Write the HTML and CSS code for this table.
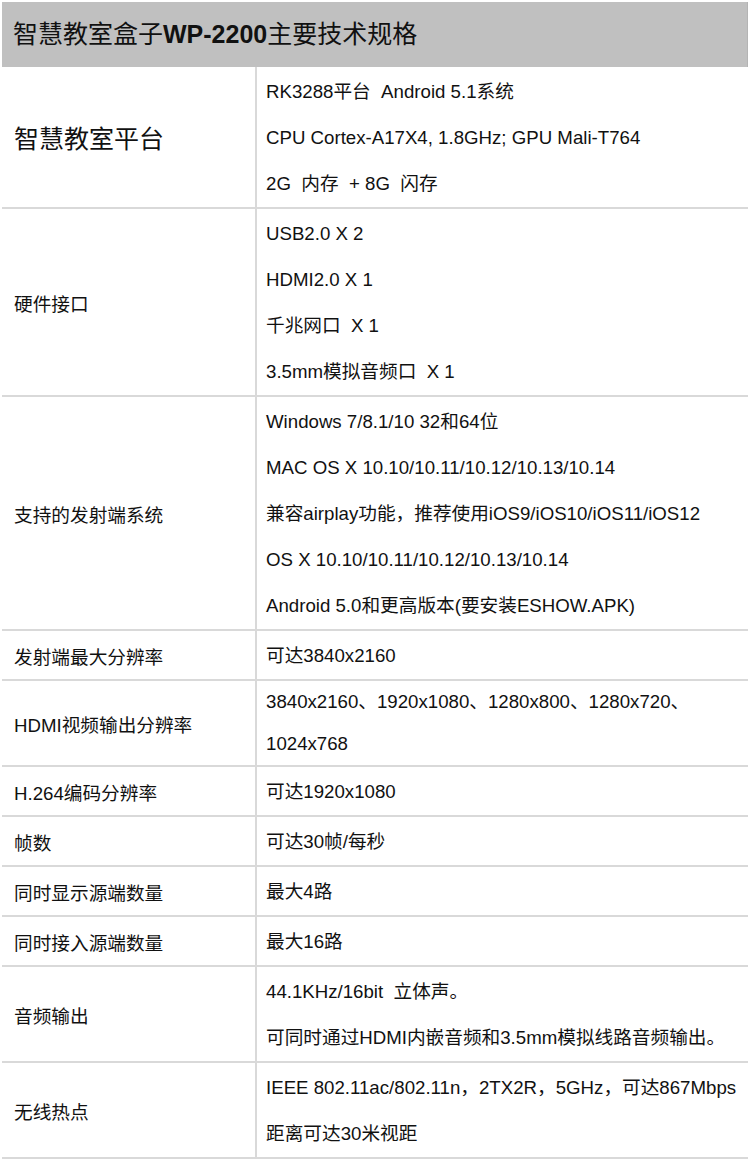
FILE: index.html
```html
<!DOCTYPE html>
<html lang="zh-CN">
<head>
<meta charset="utf-8">
<title>智慧教室盒子WP-2200主要技术规格</title>
<link rel="stylesheet" href="styles.css">
</head>
<body>
<div class="sheet">
  <div class="title">智慧教室盒子<b>WP-2200</b>主要技术规格</div>
  <table class="spec">
    <colgroup><col class="col-key"><col></colgroup>
    <tr>
      <th class="label label-lg">智慧教室平台</th>
      <td class="value">
        <p>RK3288平台&nbsp; Android 5.1系统</p>
        <p>CPU Cortex-A17X4, 1.8GHz; GPU Mali-T764</p>
        <p>2G&nbsp; 内存&nbsp; + 8G&nbsp; 闪存</p>
      </td>
    </tr>
    <tr>
      <th class="label">硬件接口</th>
      <td class="value">
        <p>USB2.0 X 2</p>
        <p>HDMI2.0 X 1</p>
        <p>千兆网口&nbsp; X 1</p>
        <p>3.5mm模拟音频口&nbsp; X 1</p>
      </td>
    </tr>
    <tr>
      <th class="label">支持的发射端系统</th>
      <td class="value">
        <p>Windows 7/8.1/10 32和64位</p>
        <p>MAC OS X 10.10/10.11/10.12/10.13/10.14</p>
        <p>兼容airplay功能，推荐使用iOS9/iOS10/iOS11/iOS12</p>
        <p>OS X 10.10/10.11/10.12/10.13/10.14</p>
        <p>Android 5.0和更高版本(要安装ESHOW.APK)</p>
      </td>
    </tr>
    <tr>
      <th class="label">发射端最大分辨率</th>
      <td class="value"><p>可达3840x2160</p></td>
    </tr>
    <tr>
      <th class="label">HDMI视频输出分辨率</th>
      <td class="value value-wrap"><p>3840x2160、1920x1080、1280x800、1280x720、1024x768</p></td>
    </tr>
    <tr>
      <th class="label">H.264编码分辨率</th>
      <td class="value"><p>可达1920x1080</p></td>
    </tr>
    <tr>
      <th class="label">帧数</th>
      <td class="value"><p>可达30帧/每秒</p></td>
    </tr>
    <tr>
      <th class="label">同时显示源端数量</th>
      <td class="value"><p>最大4路</p></td>
    </tr>
    <tr>
      <th class="label">同时接入源端数量</th>
      <td class="value"><p>最大16路</p></td>
    </tr>
    <tr>
      <th class="label">音频输出</th>
      <td class="value">
        <p>44.1KHz/16bit&nbsp; 立体声。</p>
        <p>可同时通过HDMI内嵌音频和3.5mm模拟线路音频输出。</p>
      </td>
    </tr>
    <tr>
      <th class="label">无线热点</th>
      <td class="value">
        <p>IEEE 802.11ac/802.11n，2TX2R，5GHz，可达867Mbps</p>
        <p>距离可达30米视距</p>
      </td>
    </tr>
  </table>
</div>
</body>
</html>
```
FILE: styles.css
```css
html, body {
  margin: 0;
  padding: 0;
  background: #ffffff;
}

body {
  font-family: "Liberation Sans", "Noto Sans CJK SC", sans-serif;
  color: #111111;
}

.sheet {
  width: 746px;
  padding: 2px 2px 0 2px;
}

.title {
  height: 65px;
  line-height: 65px;
  background: #c0c0c0;
  font-size: 25px;
  padding-left: 11px;
  white-space: nowrap;
  border-right: 1px solid #b4b4b4;
  box-sizing: border-box;
}

.title b {
  font-weight: bold;
}

.spec {
  width: 746px;
  border-collapse: collapse;
  table-layout: fixed;
  font-size: 18.66px;
}

.col-key {
  width: 254px;
}

.spec th,
.spec td {
  border-bottom: 2px solid #d9d9d9;
}

.label {
  text-align: left;
  font-weight: normal;
  vertical-align: middle;
  padding: 0 0 0 12px;
  white-space: nowrap;
}

.label-lg {
  font-size: 25px;
}

.value {
  border-left: 2px solid #d9d9d9;
  padding: 1px 6px 1px 9px;
  vertical-align: middle;
}

.value p {
  margin: 0;
  padding: 3px 0 1px;
  line-height: 42px;
  white-space: nowrap;
}

.value-wrap {
  padding-top: 0;
  padding-bottom: 0;
}

.value-wrap p {
  padding: 0;
  line-height: 42px;
  white-space: normal;
}
```
